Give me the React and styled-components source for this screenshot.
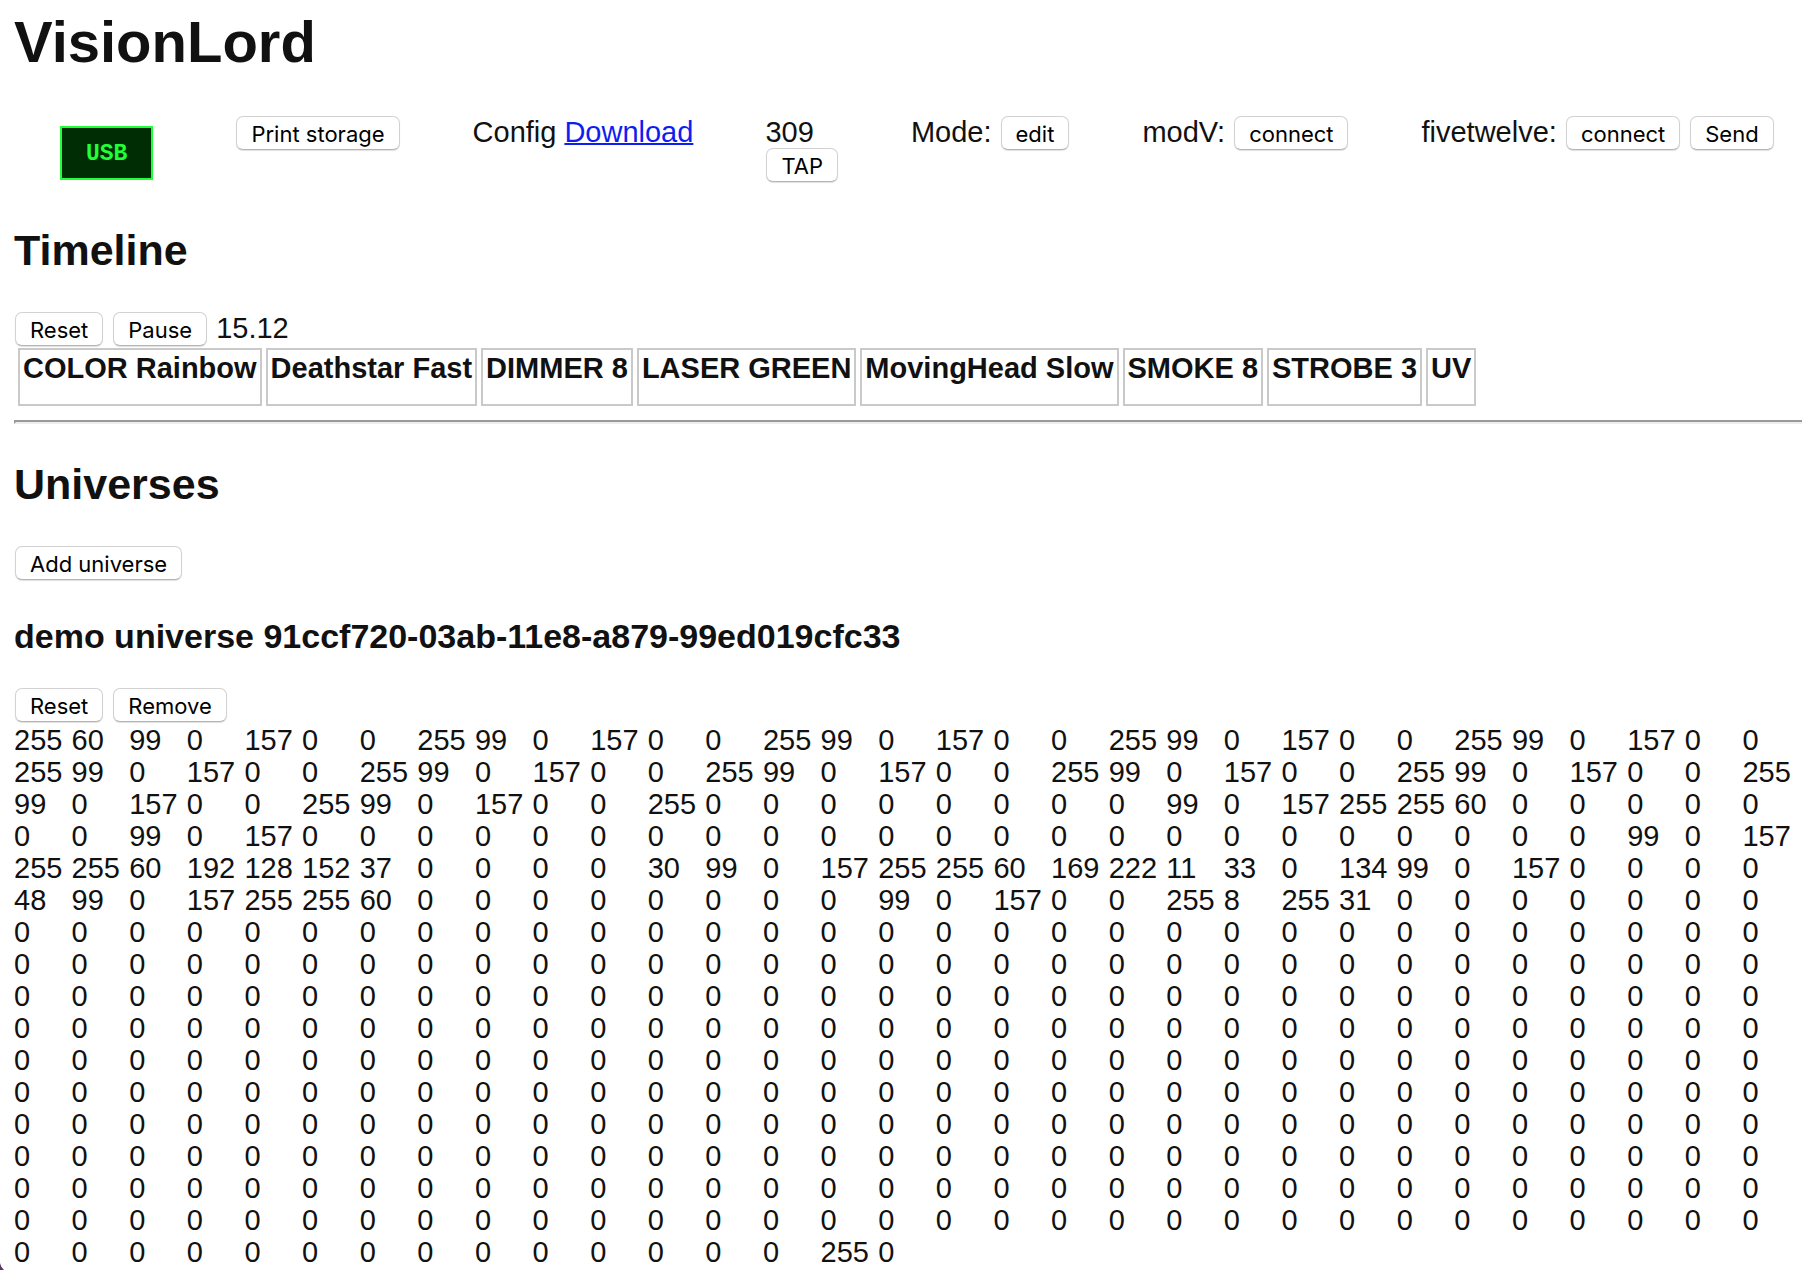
import React from "react";
import styled, { createGlobalStyle } from "styled-components";

const GlobalStyle = createGlobalStyle`
  body {
    margin: 0;
    background: #fff;
    color: #111;
    font-family: "Liberation Sans", Arial, Helvetica, sans-serif;
    font-size: 29px;
    line-height: 32px;
  }
`;

const Page = styled.main`
  padding: 10px 0 0 14px;
`;

const Title = styled.h1`
  margin: 0 0 42px;
  font-size: 58px;
  line-height: 64px;
`;

const SectionTitle = styled.h2`
  margin: 36px 0 38px;
  font-size: 43px;
  line-height: 48px;
`;

const UniverseTitle = styled.h3`
  margin: 37px 0 33px;
  font-size: 34px;
  line-height: 38px;
`;

const Toolbar = styled.ul`
  display: flex;
  align-items: flex-start;
  gap: 72px;
  margin: 0;
  padding: 0 0 0 36px;
  list-style: none;
  white-space: nowrap;
`;

const ToolbarItem = styled.li`
  display: flex;
  flex-direction: ${(p) => (p.$stacked ? "column" : "row")};
  align-items: ${(p) => (p.$stacked ? "flex-start" : "baseline")};
  gap: ${(p) => (p.$stacked ? 0 : 8)}px;
`;

const UsbStatus = styled.div`
  margin: 10px;
  padding: 10px 24px 8px;
  border: 2px solid #21ff36;
  background: #002d04;
  color: #21ff36;
  font-family: "Liberation Mono", "Courier New", monospace;
  font-size: 23px;
  font-weight: bold;
`;

const Button = styled.button`
  box-sizing: border-box;
  height: 34px;
  margin: 0 1px;
  padding: 2px 14px 0;
  border: 1px solid #d2d2d2;
  border-bottom-color: #b4b4b4;
  border-radius: 7px;
  background: #fff;
  box-shadow: 0 1px 1px rgba(0, 0, 0, 0.12);
  color: #000;
  font-family: Inter, sans-serif;
  font-size: 22px;
  line-height: 30px;
`;

const Link = styled.a`
  color: #0f1df0;
  text-decoration: underline;
  text-decoration-thickness: 2px;
`;

const Controls = styled.div`
  display: flex;
  align-items: baseline;
  gap: 8px;
`;

const Tracks = styled.ul`
  display: flex;
  gap: 4px;
  margin: 2px 0 14px;
  padding: 0 4px;
  list-style: none;
  font-weight: bold;
  white-space: nowrap;
`;

const Track = styled.li`
  padding: 2px 3px 20px;
  border: 2px solid #c9c9c9;
`;

const Divider = styled.hr`
  margin: 0;
  border: solid;
  border-width: 2px 0 2px 2px;
  border-color: #999 #eee #eee #999;
`;

const Channels = styled.div`
  display: grid;
  grid-template-columns: repeat(31, 1fr);
  margin: 2px 2px 0 0;
`;

const WindowCorner = styled.div`
  position: fixed;
  left: 0;
  bottom: 0;
  width: 4px;
  height: 7px;
  background: #5c3a68;
  clip-path: polygon(0 0, 30% 50%, 100% 100%, 0 100%);
`;

const zeros = (count) => Array(count).fill(0);
const beam = [255, 99, 0, 157, 0, 0];

const channels = [
  255, 60, 99, 0, 157, 0, 0, ...beam, ...beam, ...beam, ...beam,
  ...beam, ...beam, ...beam, ...beam, ...beam, ...beam, ...beam,
  255, ...zeros(8), 99, 0, 157, 255, 255, 60, ...zeros(5),
  0, 0, 99, 0, 157, ...zeros(23), 99, 0, 157,
  255, 255, 60, 192, 128, 152, 37, ...zeros(4), 30, 99, 0, 157,
  255, 255, 60, 169, 222, 11, 33, 0, 134, 99, 0, 157, ...zeros(4),
  48, 99, 0, 157, 255, 255, 60, ...zeros(8), 99, 0, 157, 0, 0, 255, 8, 255, 31,
  ...zeros(7),
  ...zeros(310),
  ...zeros(14), 255, 0,
];

const tracks = [
  "COLOR Rainbow",
  "Deathstar Fast",
  "DIMMER 8",
  "LASER GREEN",
  "MovingHead Slow",
  "SMOKE 8",
  "STROBE 3",
  "UV",
];

export default function App() {
  return (
    <>
      <GlobalStyle />
      <Page>
        <Title>VisionLord</Title>
        <Toolbar>
          <ToolbarItem>
            <UsbStatus>USB</UsbStatus>
          </ToolbarItem>
          <ToolbarItem>
            <Button>Print storage</Button>
          </ToolbarItem>
          <ToolbarItem>
            <span>Config</span>
            <Link href="#download">Download</Link>
          </ToolbarItem>
          <ToolbarItem $stacked>
            <span>309</span>
            <Button>TAP</Button>
          </ToolbarItem>
          <ToolbarItem>
            <span>Mode:</span>
            <Button>edit</Button>
          </ToolbarItem>
          <ToolbarItem>
            <span>modV:</span>
            <Button>connect</Button>
          </ToolbarItem>
          <ToolbarItem>
            <span>fivetwelve:</span>
            <Button>connect</Button>
            <Button>Send</Button>
          </ToolbarItem>
        </Toolbar>

        <SectionTitle>Timeline</SectionTitle>
        <Controls>
          <Button>Reset</Button>
          <Button>Pause</Button>
          <span>15.12</span>
        </Controls>
        <Tracks>
          {tracks.map((name) => (
            <Track key={name}>{name}</Track>
          ))}
        </Tracks>
        <Divider />

        <SectionTitle>Universes</SectionTitle>
        <Controls>
          <Button>Add universe</Button>
        </Controls>
        <UniverseTitle>demo universe 91ccf720-03ab-11e8-a879-99ed019cfc33</UniverseTitle>
        <Controls>
          <Button>Reset</Button>
          <Button>Remove</Button>
        </Controls>
        <Channels>
          {channels.map((value, index) => (
            <span key={index}>{value}</span>
          ))}
        </Channels>
      </Page>
      <WindowCorner />
    </>
  );
}
